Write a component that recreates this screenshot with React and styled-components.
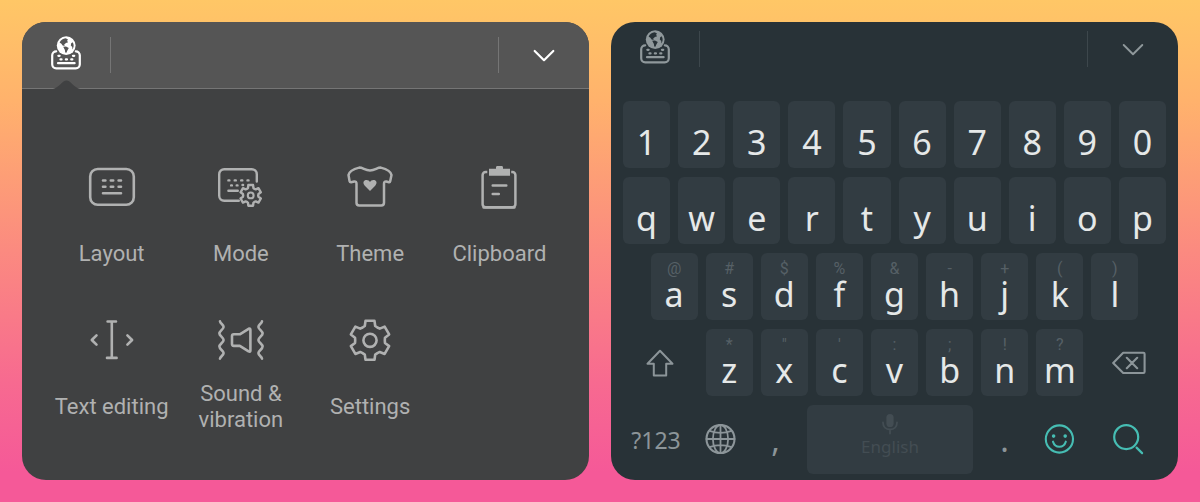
import React from "react";
import styled, { createGlobalStyle } from "styled-components";

const GlobalStyle = createGlobalStyle`
  *, *::before, *::after { box-sizing: border-box; }
  body { margin: 0; }
  button { border: 0; padding: 0; margin: 0; background: none; color: inherit; font: inherit; cursor: pointer; }
  svg { display: block; flex: none; }
`;

const Page = styled.main`
  display: flex;
  align-items: stretch;
  gap: 22px;
  min-height: 100vh;
  padding: 22px;
  background: linear-gradient(#ffc766 0%, #ffb26c 20%, #fb8a80 50%, #f76a90 76%, #f55998 94%);
`;

const Panel = styled.section`
  flex: 1 1 0;
  min-width: 0;
  display: flex;
  flex-direction: column;
  overflow: hidden;
  border-radius: 24px;
  background: ${(p) => p.$background};
`;

const Toolbar = styled.header`
  display: flex;
  align-items: center;
  justify-content: space-between;
  height: ${(p) => (p.$raised ? 67 : 54)}px;
  background: ${(p) => (p.$raised ? "#555555" : "transparent")};
  border-bottom: ${(p) => (p.$raised ? "1px solid #757575" : "0")};
  color: ${(p) => (p.$raised ? "#ffffff" : "#8f989b")};
`;

const ToolbarSide = styled.div`
  position: relative;
  display: flex;
  align-items: center;
  align-self: stretch;
`;

const ToolbarButton = styled.button`
  display: flex;
  align-items: center;
  justify-content: center;
  width: ${(p) => p.$width}px;
  height: 100%;
`;

const Divider = styled.span`
  width: 1px;
  height: 36px;
  background: ${(p) => (p.$raised ? "#757575" : "#3d474c")};
`;

const Notch = styled.svg`
  position: absolute;
  left: 31px;
  bottom: -1px;
`;

const Options = styled.nav`
  display: grid;
  grid-template-columns: repeat(4, 1fr);
  row-gap: 36px;
  padding: 74px 25px 47px;
  color: #b0b1b1;
`;

const Option = styled.button`
  display: flex;
  flex-direction: column;
  align-items: center;
  gap: 17px;
`;

const OptionLabel = styled.span`
  display: flex;
  align-items: center;
  justify-content: center;
  height: 52px;
  max-width: 120px;
  font: 400 22px/26px Roboto, sans-serif;
  text-align: center;
`;

const Keys = styled.div`
  display: flex;
  flex-direction: column;
  gap: 9px;
  padding: 25px 12px 6px;
  font-family: "Noto Sans", sans-serif;
  color: #8c9599;
`;

const KeyRow = styled.div`
  display: flex;
  justify-content: center;
  gap: 8px;
  height: ${(p) => (p.$tall ? 69 : 67)}px;
`;

const LetterKey = styled.button`
  display: flex;
  flex-direction: column;
  align-items: center;
  flex: 0 0 calc((100% - 72px) / 10);
  padding-top: 6px;
  border-radius: 6px;
  background: #323c42;
`;

const Hint = styled.span`
  height: 20px;
  font: 400 16px/20px Roboto, sans-serif;
  color: #566066;
`;

const Letter = styled.span`
  font-size: 34px;
  line-height: 30px;
  color: #e5e8e8;
`;

const ActionKey = styled.button`
  display: flex;
  align-items: center;
  justify-content: center;
  flex: ${(p) => p.$grow || 1} 1 0;
  min-width: 0;
  font-size: ${(p) => (p.$punctuation ? 32 : 23)}px;
  line-height: 32px;
  color: ${(p) => (p.$accent ? "#46bdb3" : "inherit")};
`;

const SpaceKey = styled.button`
  display: flex;
  flex-direction: column;
  align-items: center;
  flex: 166 1 0;
  padding-top: 8px;
  border-radius: 6px;
  background: #323c42;
  color: #434d53;
  font-size: 17px;
  line-height: 24px;
`;

const stroke = {
  fill: "none",
  stroke: "currentColor",
  strokeLinecap: "round",
  strokeLinejoin: "round",
  "aria-hidden": true,
};

function gearPath(cx, cy, outer, inner) {
  const points = [];
  for (let tooth = 0; tooth < 360; tooth += 60) {
    [[outer, -13], [outer, 13], [inner, 20], [inner - 0.4, 30], [inner, 40]].forEach(([r, offset]) => {
      const a = ((tooth + offset) * Math.PI) / 180;
      points.push(`${(cx + r * Math.sin(a)).toFixed(2)} ${(cy - r * Math.cos(a)).toFixed(2)}`);
    });
  }
  return `M${points.join("L")}Z`;
}

const KeyboardGlobeIcon = ({ land }) => (
  <svg width="40" height="40" viewBox="0 0 40 40" {...stroke} strokeWidth="2.2">
    <path d="M10.2 16.3a4 4 0 0 0-4 4v9a4 4 0 0 0 4 4h19.6a4 4 0 0 0 4-4v-9a4 4 0 0 0-4-4" />
    <path d="M12 28.2h16.6" />
    <path d="M12.4 20.8h1.2M27 20.8h1.2M14.5 24.4h1M19.9 24.4h1M25.3 24.4h1" strokeWidth="2.3" />
    <circle cx="20.2" cy="10.6" r="9.4" fill="currentColor" stroke="none" />
    <path fill={land} stroke="none" d="M13.6 7.4C15 4.8 17 3.7 19.5 3.2L21.9 4.3L21.1 6L22.2 7.2L19.9 8L18.1 9.7L18.8 11L16.6 10.6L15.4 8.7ZM17.2 11.8L20 11.5L22.8 13L21.5 15.2L20.4 17.8L19.2 17.5L18.9 14.9ZM26.6 7.2L25.2 8.2L24.8 10.6L26.3 11.9L26.2 14.5C28 12.2 28.2 9.7 26.6 7.2Z" />
  </svg>
);

const ChevronIcon = ({ weight }) => (
  <svg width="24" height="24" viewBox="0 0 24 24" {...stroke} strokeWidth={weight}>
    <path d="M2.7 8L12 17.2L21.3 8" />
  </svg>
);

const LayoutIcon = () => (
  <svg width="48" height="48" viewBox="0 0 48 48" {...stroke} strokeWidth="2.6">
    <rect x="2.2" y="6" width="43.6" height="35.8" rx="7.5" />
    <path d="M15 17.5h2.4M22.8 17.5h2.4M30.6 17.5H33M15 23.8h2.4M22.8 23.8h2.4M30.6 23.8H33M15 30.2h18" />
  </svg>
);

const ModeIcon = () => (
  <svg width="48" height="48" viewBox="0 0 48 48" {...stroke} strokeWidth="2.4">
    <path d="M39.8 18.5v-7.3a5 5 0 0 0-5-5H7.2a5 5 0 0 0-5 5v21.6a5 5 0 0 0 5 5h14.6" />
    <path d="M11.4 17.4h1M17.7 17.4h1.1M24.2 17.4h1.1M30.5 17.4h1M14.1 22.4h.8M19.7 22.4h.8M25.5 22h.6M11.4 27.7h9.4" />
    <path d={gearPath(33.7, 32.4, 10.6, 7.9)} />
    <circle cx="33.7" cy="32.4" r="2.9" strokeWidth="2.1" />
  </svg>
);

const ThemeIcon = () => (
  <svg width="48" height="48" viewBox="0 0 48 48" {...stroke} strokeWidth="2.5">
    <path d="M13.2 4.6C17.2 4.6 18.8 7.4 24 7.4S30.8 4.6 34.8 4.6C40.5 6 45 8.8 45.5 12L44.2 18.3Q44 19.3 43 19.2L40.3 18.5Q38 18.3 38 20.8V39.7Q38 42.4 35.3 42.4H13.2Q10.5 42.4 10.5 39.7V20.8Q10.5 18.3 8.2 18.5L5 19.3Q3.8 19.3 3.6 18.2L2.5 12C3 8.8 7.5 6 13.2 4.6Z" />
    <path fill="currentColor" stroke="none" d="M24 28L18.8 22.8C16.2 19.8 17.7 17.1 20.5 17.1C22.2 17.1 23.3 18 24 19C24.7 18 25.8 17.1 27.5 17.1C30.3 17.1 31.8 19.8 29.2 22.8Z" />
  </svg>
);

const ClipboardIcon = () => (
  <svg width="48" height="48" viewBox="0 0 48 48" {...stroke} strokeWidth="2.5">
    <path d="M12.3 9H10.6a3 3 0 0 0-3 3v29.3a3 3 0 0 0 3 3h26.8a3 3 0 0 0 3-3V12a3 3 0 0 0-3-3h-1.2" strokeLinecap="butt" />
    <path d="M8.6 44.5h30.8" />
    <path d="M17.7 22.5h13.6M17.7 31h6.1" />
    <path fill="currentColor" stroke="none" d="M14 5.8h7V4.4Q21 3 22.4 3h4.2Q28 3 28 4.4v1.4h7v7H14Z" />
  </svg>
);

const TextEditingIcon = () => (
  <svg width="48" height="48" viewBox="0 0 48 48" {...stroke} strokeWidth="2.6">
    <path d="M23.8 5.5v36.4M19.6 5.5H28M19 41.9h9.6M8.5 19.3L3.8 24L8.5 28.7M39.4 19.3L44.1 24L39.4 28.7" />
  </svg>
);

const SoundIcon = () => (
  <svg width="48" height="48" viewBox="0 0 48 48" {...stroke} strokeWidth="2.6">
    <path d="M3 5.3C3.3 7.6 6.8 8.6 6.6 11S2.4 15 2.4 17.4S6.6 21.4 6.6 24S2.4 28 2.4 30.6S6.6 34.6 6.6 37S3.3 40.4 3 42.7" />
    <path d="M45 5.3C44.7 7.6 41.2 8.6 41.4 11S45.6 15 45.6 17.4S41.4 21.4 41.4 24S45.6 28 45.6 30.6S41.4 34.6 41.4 37S44.7 40.4 45 42.7" />
    <path d="M16.8 18.3h6L31.6 12.8Q33.4 12 33.4 13.8V34.5Q33.4 36.3 31.6 35.4L22.8 29.9h-6Q15 29.9 15 28.1v-8Q15 18.3 16.8 18.3Z" />
  </svg>
);

const SettingsIcon = () => (
  <svg width="48" height="48" viewBox="0 0 48 48" {...stroke} strokeWidth="2.6">
    <path d={gearPath(24, 24.3, 20, 15.2)} />
    <circle cx="24" cy="24.3" r="6.6" />
  </svg>
);

const ShiftIcon = () => (
  <svg width="28" height="28" viewBox="0 0 28 28" {...stroke} strokeWidth="2">
    <path d="M14 1.8L26.5 14.8H20.2V26.4H7.8V14.8H1.5Z" />
  </svg>
);

const BackspaceIcon = () => (
  <svg width="34" height="24" viewBox="0 0 34 24" {...stroke} strokeWidth="2.1">
    <path d="M11.2 1.8H31.4Q32.6 1.8 32.6 3V20.8Q32.6 22 31.4 22H11.2L1.2 12ZM14.8 6.8L25.2 17.2M25.2 6.8L14.8 17.2" />
  </svg>
);

const GlobeIcon = () => (
  <svg width="32" height="32" viewBox="0 0 32 32" {...stroke} strokeWidth="1.8">
    <circle cx="15.5" cy="15" r="14" strokeWidth="2.1" />
    <ellipse cx="15.5" cy="15" rx="7.6" ry="14" />
    <path d="M15.5 1v28M1.5 15h28M4.5 6.8Q15.5 11 26.5 6.8M4.5 23.2Q15.5 19 26.5 23.2" />
  </svg>
);

const MicIcon = () => (
  <svg width="18" height="22" viewBox="0 0 18 22" {...stroke} strokeWidth="1.8">
    <rect x="5.4" y="1" width="7.2" height="13" rx="3.6" fill="currentColor" stroke="none" />
    <path d="M2 9.5c0 4.4 2.8 7 7 7s7-2.6 7-7M9 16.5v4" />
  </svg>
);

const SmileIcon = () => (
  <svg width="32" height="32" viewBox="0 0 32 32" {...stroke} strokeWidth="2.1">
    <circle cx="15.4" cy="15" r="13.6" />
    <circle cx="9.6" cy="12.1" r="1.8" fill="currentColor" stroke="none" />
    <circle cx="21.2" cy="12.1" r="1.8" fill="currentColor" stroke="none" />
    <path d="M9 17.7C10 20.9 12.4 22.7 15.4 22.7S20.8 20.9 21.8 17.7" />
  </svg>
);

const SearchIcon = () => (
  <svg width="32" height="32" viewBox="0 0 32 32" {...stroke} strokeWidth="2.2">
    <circle cx="13.2" cy="13.1" r="12" />
    <path d="M23.6 23.6L29.1 29.1" />
  </svg>
);

const options = [
  ["Layout", LayoutIcon],
  ["Mode", ModeIcon],
  ["Theme", ThemeIcon],
  ["Clipboard", ClipboardIcon],
  ["Text editing", TextEditingIcon],
  ["Sound & vibration", SoundIcon],
  ["Settings", SettingsIcon],
];

const homeHints = ["@", "#", "$", "%", "&", "-", "+", "(", ")"];
const bottomHints = ["*", '"', "'", ":", ";", "!", "?"];

function LetterKeys({ letters, hints = [] }) {
  return [...letters].map((letter, i) => (
    <LetterKey key={letter} type="button">
      <Hint>{hints[i]}</Hint>
      <Letter>{letter}</Letter>
    </LetterKey>
  ));
}

function KeyboardToolbar({ raised }) {
  return (
    <Toolbar $raised={raised}>
      <ToolbarSide>
        <ToolbarButton type="button" $width={88} aria-label="Keyboard options">
          <KeyboardGlobeIcon land={raised ? "#555555" : "#283237"} />
        </ToolbarButton>
        <Divider $raised={raised} />
        {raised && (
          <Notch width="27" height="9" viewBox="0 0 27 9" aria-hidden="true">
            <path d="M0 9C6 7.5 9.5 0.5 13.5 0.5S21 7.5 27 9Z" fill="#404142" />
          </Notch>
        )}
      </ToolbarSide>
      <ToolbarSide>
        <Divider $raised={raised} />
        <ToolbarButton type="button" $width={90} aria-label="Hide keyboard">
          <ChevronIcon weight={raised ? 2.2 : 1.9} />
        </ToolbarButton>
      </ToolbarSide>
    </Toolbar>
  );
}

export default function App() {
  return (
    <>
      <GlobalStyle />
      <Page>
        <Panel $background="#404142" aria-label="Keyboard menu">
          <KeyboardToolbar raised />
          <Options>
            {options.map(([label, Icon]) => (
              <Option key={label} type="button">
                <Icon />
                <OptionLabel>{label}</OptionLabel>
              </Option>
            ))}
          </Options>
        </Panel>

        <Panel $background="#283237" aria-label="Keyboard">
          <KeyboardToolbar />
          <Keys>
            <KeyRow><LetterKeys letters="1234567890" /></KeyRow>
            <KeyRow><LetterKeys letters="qwertyuiop" /></KeyRow>
            <KeyRow><LetterKeys letters="asdfghjkl" hints={homeHints} /></KeyRow>
            <KeyRow>
              <ActionKey type="button" aria-label="Shift"><ShiftIcon /></ActionKey>
              <LetterKeys letters="zxcvbnm" hints={bottomHints} />
              <ActionKey type="button" aria-label="Delete"><BackspaceIcon /></ActionKey>
            </KeyRow>
            <KeyRow $tall>
              <ActionKey type="button" $grow={66}>?123</ActionKey>
              <ActionKey type="button" $grow={47} aria-label="Switch language"><GlobeIcon /></ActionKey>
              <ActionKey type="button" $grow={47} $punctuation>,</ActionKey>
              <SpaceKey type="button"><MicIcon />English</SpaceKey>
              <ActionKey type="button" $grow={47} $punctuation>.</ActionKey>
              <ActionKey type="button" $grow={47} $accent aria-label="Emoji"><SmileIcon /></ActionKey>
              <ActionKey type="button" $grow={75} $accent aria-label="Search"><SearchIcon /></ActionKey>
            </KeyRow>
          </Keys>
        </Panel>
      </Page>
    </>
  );
}
